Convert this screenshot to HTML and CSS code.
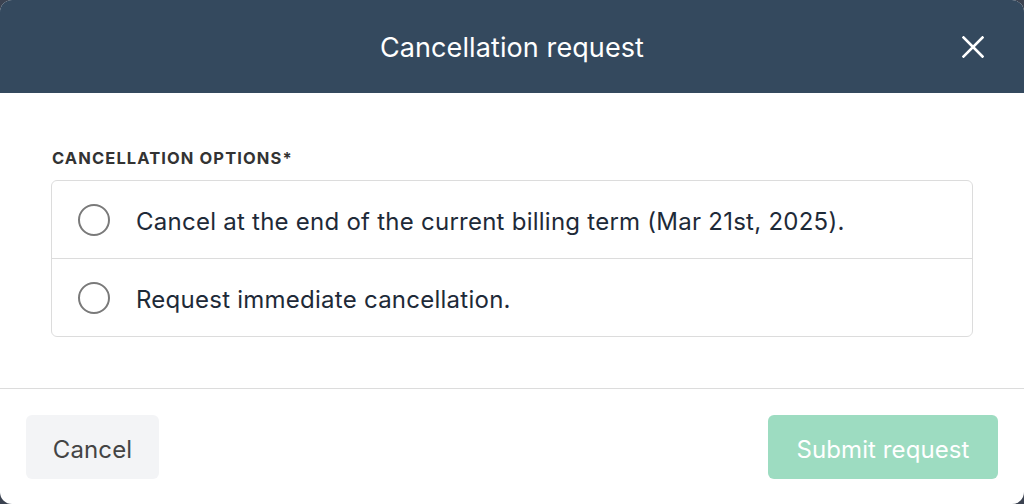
FILE: index.html
```html
<!DOCTYPE html>
<html>
<head>
<meta charset="utf-8">
<link rel="stylesheet" href="styles.css">
</head>
<body>
<div class="modal">
  <header class="modal-header">
    <h1 class="modal-title">Cancellation request</h1>
    <button class="close-btn" aria-label="Close">
      <svg width="22" height="22" viewBox="0 0 22 22"><path d="M1.5 1.5L20.5 20.5M20.5 1.5L1.5 20.5" stroke="#fff" stroke-width="2.6" stroke-linecap="square" fill="none"/></svg>
    </button>
  </header>
  <main class="modal-body">
    <div class="field-label">Cancellation options*</div>
    <div class="options">
      <label class="option">
        <span class="radio"></span>
        <span class="option-text">Cancel at the end of the current billing term (Mar 21st, 2025).</span>
      </label>
      <label class="option">
        <span class="radio"></span>
        <span class="option-text">Request immediate cancellation.</span>
      </label>
    </div>
  </main>
  <footer class="modal-footer">
    <button class="btn btn-secondary">Cancel</button>
    <button class="btn btn-primary">Submit request</button>
  </footer>
</div>
</body>
</html>
```

FILE: styles.css
```css
* { box-sizing: border-box; }
html, body { margin: 0; padding: 0; }
body {
  background: #3b4250;
  font-family: Inter, "Noto Sans", sans-serif;
  width: 1024px;
  height: 504px;
  overflow: hidden;
}
.modal {
  width: 1024px;
  height: 504px;
  background: #fff;
  border-radius: 12px;
  overflow: hidden;
  display: flex;
  flex-direction: column;
}
.modal-header {
  height: 93px;
  flex: none;
  background: #34495e;
  display: flex;
  align-items: center;
  justify-content: center;
  position: relative;
}
.modal-title {
  margin: 0;
  padding-top: 2px;
  color: #fff;
  font-size: 27px;
  font-weight: 400;
  line-height: 1;
  letter-spacing: 0.1px;
}
.close-btn {
  position: absolute;
  right: 40px;
  top: 36px;
  width: 22px;
  height: 22px;
  padding: 0;
  border: 0;
  background: none;
  display: flex;
}
.modal-body {
  flex: none;
  padding: 55px 51px 51px 51px;
  border-bottom: 1px solid #dcdcdc;
}
.field-label {
  font-size: 16.5px;
  font-weight: 700;
  text-transform: uppercase;
  letter-spacing: 1.1px;
  color: #333;
  line-height: 20px;
  margin-bottom: 12px;
  padding-left: 1px;
}
.options {
  border: 1px solid #dcdcdc;
  border-radius: 6px;
}
.option {
  height: 77px;
  display: flex;
  align-items: center;
  padding-left: 26px;
}
.option + .option {
  height: 78px;
  border-top: 1px solid #dcdcdc;
}
.radio {
  width: 32px;
  height: 32px;
  border: 2.5px solid #7a7a7a;
  border-radius: 50%;
  flex: none;
  margin-right: 26px;
}
.option-text {
  font-size: 24px;
  letter-spacing: 0.25px;
  color: #1e2a38;
  padding-top: 4px;
}
.modal-footer {
  flex: 1;
  display: flex;
  justify-content: space-between;
  align-items: center;
  padding: 1px 26px 0 26px;
}
.btn {
  font-family: Inter, "Noto Sans", sans-serif;
  height: 64px;
  border: 0;
  border-radius: 6px;
  font-size: 24px;
  padding: 4px 0 0 0;
  letter-spacing: 0.1px;
}
.btn-secondary {
  background: #f3f4f6;
  color: #444;
  width: 133px;
}
.btn-primary {
  background: #9ddcc1;
  color: #fff;
  width: 230px;
}
```
